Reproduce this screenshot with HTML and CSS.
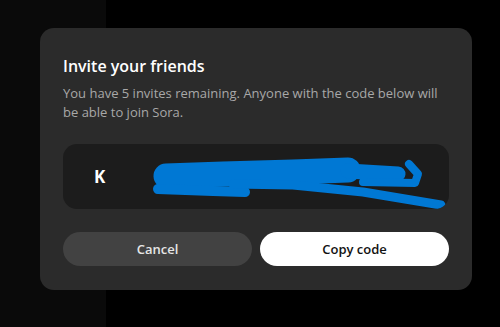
FILE: index.html
```html
<!DOCTYPE html>
<html lang="en">
<head>
    <meta charset="UTF-8">
    <meta name="viewport" content="width=device-width, initial-scale=1.0">
    <title>Invite your friends</title>
    <link rel="stylesheet" href="styles.css">
</head>
<body>

<div class="app">
    <div class="sidebar"></div>
    <div class="main"></div>
</div>

<!-- invite dialog -->
<div class="modal">
    <h2 class="modal-title">Invite your friends</h2>
    <p class="modal-text">You have 5 invites remaining. Anyone with the code below will be able to join Sora.</p>

    <div class="code-box">
        <span class="code">K</span>
        <!-- redaction scribble -->
        <svg class="scribble" viewBox="0 0 386 65" width="386" height="65">
            <g fill="none" stroke="#0078d4" stroke-linecap="round" stroke-linejoin="round">
                <path d="M103 32 L160 30 L230 28 L285 26" stroke-width="25"/>
                <path d="M95 45 L150 47 L182 48" stroke-width="10"/>
                <path d="M170 40 L230 41 L300 48 L378 61" stroke-width="9"/>
                <path d="M285 27 L335 30" stroke-width="15"/>
                <path d="M300 38 L352 39 L355 30 L346 20" stroke-width="8"/>
            </g>
        </svg>
    </div>

    <div class="modal-actions">
        <button class="btn btn-cancel">Cancel</button>
        <button class="btn btn-copy">Copy code</button>
    </div>
</div>

</body>
</html>
```

FILE: styles.css
```css
body {
    margin: 0;
    font-family: 'Open Sans', 'Noto Sans', sans-serif;
    background-color: #000;
}
.app {
    display: flex;
    height: 327px;
}
.sidebar {
    width: 106px;
    background-color: #0a0a0a;
}
.main {
    flex: 1;
    background-color: #000;
}
.modal {
    position: absolute;
    left: 40px;
    top: 28px;
    width: 432px;
    height: 262px;
    box-sizing: border-box;
    padding: 27px 23px 0 23px;
    background-color: #2b2b2b;
    border-radius: 14px;
}
.modal-title {
    margin: 0;
    font-size: 16px;
    line-height: 22px;
    font-weight: 600;
    color: #fff;
}
.modal-text {
    margin: 7px 0 0 0;
    font-size: 13px;
    line-height: 19px;
    color: #a8a8a8;
}
.code-box {
    position: relative;
    display: flex;
    align-items: center;
    height: 65px;
    margin-top: 22px;
    padding-left: 31px;
    background-color: #1c1c1c;
    border-radius: 14px;
    overflow: hidden;
}
.code {
    font-size: 17px;
    font-weight: 700;
    color: #fff;
}
.scribble {
    position: absolute;
    left: 0;
    top: 0;
}
.modal-actions {
    display: flex;
    gap: 8px;
    margin-top: 23px;
}
.btn {
    flex: 1;
    height: 34px;
    border: none;
    border-radius: 17px;
    font-family: inherit;
    font-size: 13px;
    font-weight: 600;
    cursor: pointer;
}
.btn-cancel {
    background-color: #424242;
    color: #e6e6e6;
}
.btn-copy {
    background-color: #fff;
    color: #111;
}
```
